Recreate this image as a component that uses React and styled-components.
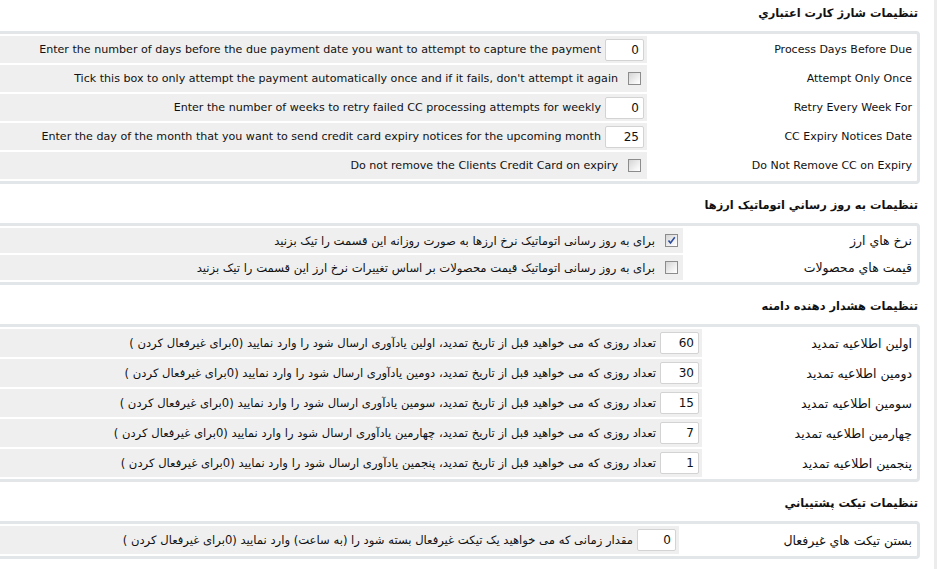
import React from "react";
import styled, { createGlobalStyle } from "styled-components";

const GlobalStyle = createGlobalStyle`
  html, body { margin: 0; padding: 0; background: #fff; overflow: hidden; }
  body { font-family: "DejaVu Sans", Tahoma, sans-serif; color: #111; }
`;

const Page = styled.div`
  direction: rtl;
  width: 937px;
  height: 569px;
  box-sizing: border-box;
  border-right: 3px solid #ececec;
  padding: 5px 14px 0 0;
  overflow: hidden;
`;

const Section = styled.section`
  margin-left: -12px;
`;

const Heading = styled.h3`
  margin: ${(p) => (p.$first ? "0" : "13px")} 0 10px 0;
  padding-right: 2px;
  font-size: 11.4px;
  line-height: 16px;
  font-weight: bold;
  color: #111;
`;

const Panel = styled.div`
  border: 3px solid #e2e6e9;
  border-radius: 4px;
  padding: 2px;
  display: grid;
  gap: 2px;
  background: #fff;
`;

const Row = styled.div`
  display: grid;
  grid-template-columns: ${(p) => p.$label}px 1fr;
  column-gap: 2px;
  height: ${(p) => p.$h}px;
`;

const Label = styled.div`
  display: flex;
  align-items: center;
  padding-right: 3px;
  font-size: ${(p) => (p.$ltr ? "11px" : "12.5px")};
  white-space: nowrap;
  direction: ${(p) => (p.$ltr ? "ltr" : "rtl")};
  justify-content: ${(p) => (p.$ltr ? "flex-end" : "flex-start")};
`;

const Field = styled.div`
  display: flex;
  align-items: center;
  background: #efefef;
  padding-right: 3px;
  white-space: nowrap;
`;

const Text = styled.span`
  direction: ${(p) => (p.$ltr ? "ltr" : "rtl")};
  font-size: ${(p) => (p.$ltr ? "11.1px" : "11.6px")};
  margin-right: ${(p) => p.$gap || 4}px;
`;

const NumInput = styled.input`
  width: 39px;
  height: 22px;
  box-sizing: border-box;
  border: 1px solid #d3d3d3;
  border-radius: 2px;
  background: #fff;
  padding: 0 4px;
  text-align: right;
  direction: ltr;
  font-family: "DejaVu Sans", Tahoma, sans-serif;
  font-size: 12px;
  color: #111;
  outline: none;
`;

const Box = styled.span`
  width: 13px;
  height: 13px;
  box-sizing: border-box;
  border: 1px solid #8c8c8c;
  background: linear-gradient(135deg, #d4d4d4 0%, #f4f4f4 70%, #fff 100%);
  margin-right: ${(p) => p.$mr}px;
  display: flex;
  align-items: center;
  justify-content: center;
  flex: none;
`;

const Check = ({ checked, mr = 2 }) => (
  <Box $mr={mr}>
    {checked && (
      <svg width="9" height="9" viewBox="0 0 9 9">
        <path d="M1.5 4.5 L3.5 7 L7.8 1.2" fill="none" stroke="#2c4b9c" strokeWidth="1.6" />
      </svg>
    )}
  </Box>
);

const ccRows = [
  { label: "Process Days Before Due", text: "Enter the number of days before the due payment date you want to attempt to capture the payment", value: "0" },
  { label: "Attempt Only Once", text: "Tick this box to only attempt the payment automatically once and if it fails, don't attempt it again", check: true },
  { label: "Retry Every Week For", text: "Enter the number of weeks to retry failed CC processing attempts for weekly", value: "0" },
  { label: "CC Expiry Notices Date", text: "Enter the day of the month that you want to send credit card expiry notices for the upcoming month", value: "25" },
  { label: "Do Not Remove CC on Expiry", text: "Do not remove the Clients Credit Card on expiry", check: true },
];

const currencyRows = [
  { label: "نرخ هاي ارز", text: "برای به روز رسانی اتوماتیک نرخ ارزها به صورت روزانه این قسمت را تیک بزنید", checked: true },
  { label: "قیمت هاي محصولات", text: "برای به روز رسانی اتوماتیک قیمت محصولات بر اساس تغییرات نرخ ارز این قسمت را تیک بزنید", checked: false },
];

const ordinals = ["اولین", "دومین", "سومین", "چهارمین", "پنجمین"];
const values = ["60", "30", "15", "7", "1"];

export default function App() {
  return (
    <>
      <GlobalStyle />
      <Page>
        <Section>
          <Heading $first>تنظیمات شارژ کارت اعتباري</Heading>
          <Panel>
            {ccRows.map((r) => (
              <Row key={r.label} $label={266} $h={27}>
                <Label $ltr>{r.label}</Label>
                <Field>
                  {r.check ? <Check mr={3} /> : <NumInput readOnly value={r.value} />}
                  <Text $ltr $gap={r.check ? 10 : 4}>{r.text}</Text>
                </Field>
              </Row>
            ))}
          </Panel>
        </Section>

        <Section>
          <Heading>تنظیمات به روز رساني اتوماتیک ارزها</Heading>
          <Panel>
            {currencyRows.map((r) => (
              <Row key={r.label} $label={230} $h={25}>
                <Label>{r.label}</Label>
                <Field>
                  <Check checked={r.checked} mr={2} />
                  <Text $gap={10}>{r.text}</Text>
                </Field>
              </Row>
            ))}
          </Panel>
        </Section>

        <Section>
          <Heading>تنظیمات هشدار دهنده دامنه</Heading>
          <Panel>
            {ordinals.map((o, i) => (
              <Row key={o} $label={211} $h={28}>
                <Label>{o} اطلاعیه تمدید</Label>
                <Field>
                  <NumInput readOnly value={values[i]} />
                  <Text $gap={4}>
                    {`تعداد روزی که می خواهید قبل از تاریخ تمدید، ${o} یادآوری ارسال شود را وارد نمایید (0برای غیرفعال کردن )`}
                  </Text>
                </Field>
              </Row>
            ))}
          </Panel>
        </Section>

        <Section>
          <Heading>تنظیمات تیکت پشتیباني</Heading>
          <Panel>
            <Row $label={234} $h={28}>
              <Label>بستن تیکت هاي غیرفعال</Label>
              <Field>
                <NumInput readOnly value="0" />
                <Text $gap={4}>
                  مقدار زمانی که می خواهید یک تیکت غیرفعال بسته شود را (به ساعت) وارد نمایید (0برای غیرفعال کردن )
                </Text>
              </Field>
            </Row>
          </Panel>
        </Section>
      </Page>
    </>
  );
}
